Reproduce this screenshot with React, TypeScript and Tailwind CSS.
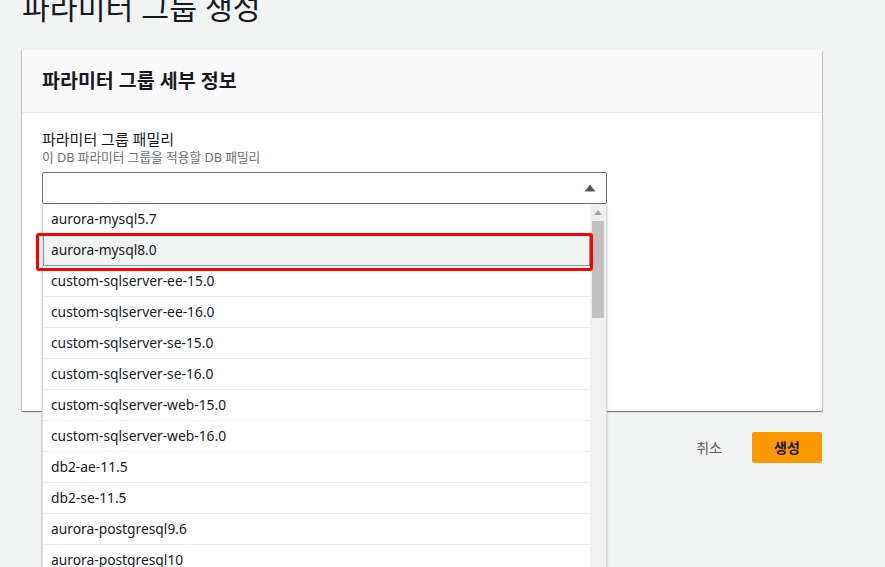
import React from "react";

const items = [
  "aurora-mysql5.7",
  "aurora-mysql8.0",
  "custom-sqlserver-ee-15.0",
  "custom-sqlserver-ee-16.0",
  "custom-sqlserver-se-15.0",
  "custom-sqlserver-se-16.0",
  "custom-sqlserver-web-15.0",
  "custom-sqlserver-web-16.0",
  "db2-ae-11.5",
  "db2-se-11.5",
  "aurora-postgresql9.6",
  "aurora-postgresql10",
];

export default function App() {
  return (
    <div
      className="relative w-[885px] h-[567px] overflow-hidden bg-[#f2f3f3] pl-[22px] text-[#16191f] flex flex-col"
      style={{ fontFamily: '"Noto Sans", "Noto Sans CJK KR", sans-serif' }}
    >
      <div className="h-[50px] flex flex-col shrink-0">
        <h1 className="text-[30.3px] leading-[30px] -mt-[7px] font-normal text-[#16191f] whitespace-nowrap">
          파라미터 그룹 생성
        </h1>
      </div>
      <div className="w-[800px] h-[361px] shrink-0 bg-white shadow-[0_1px_1px_0_rgba(0,28,36,0.3),1px_1px_1px_0_rgba(0,28,36,0.15),-1px_1px_1px_0_rgba(0,28,36,0.15)]">
        <div className="h-[63px] bg-[#fafafa] border-b border-[#eaeded] flex items-center px-[20px]">
          <h2 className="text-[19.5px] font-bold leading-none">파라미터 그룹 세부 정보</h2>
        </div>
        <div className="px-[20px] pt-[16px]">
          <div className="text-[15px] leading-[20px] text-[#16191f]">파라미터 그룹 패밀리</div>
          <div className="text-[12.7px] leading-[16px] text-[#687078]">이 DB 파라미터 그룹을 적용할 DB 패밀리</div>
          <div className="relative mt-[7px] w-[565px]">
            <div className="h-[32px] border border-[#687078] rounded-[2px] flex items-center justify-end pr-[10px] bg-white">
              <svg width="12" height="8" viewBox="0 0 12 8">
                <path d="M0.5 7.5 L6 0.5 L11.5 7.5 Z" fill="#545b64" />
              </svg>
            </div>
            <div className="absolute left-0 top-[32px] w-[565px] h-[400px] bg-white border border-t-0 border-[#d5dbdb] shadow-[0_1px_2px_rgba(0,28,36,0.3)] flex z-10">
              <div className="flex-1">
                {items.map((it, i) => (
                  <div
                    key={it}
                    className={
                      i === 1
                        ? "h-[31px] flex items-center pl-[7px] text-[13.8px] bg-[#f2f3f3] border border-[#879596]"
                        : "h-[31px] flex items-center pl-[8px] text-[13.8px] border-b border-[#eaeded]"
                    }
                  >
                    {it}
                  </div>
                ))}
              </div>
              <div className="w-[16px] bg-[#f1f1f1] flex flex-col items-center">
                <svg width="8" height="5" viewBox="0 0 8 5" className="mt-[6px]">
                  <path d="M0 5 L4 0 L8 5 Z" fill="#a3a3a3" />
                </svg>
                <div className="mt-[6px] w-[12px] h-[97px] bg-[#c1c1c1]" />
              </div>
            </div>
            <div className="absolute left-[-6px] top-[61px] w-[557px] h-[38px] border-[3px] border-[#ff0000] rounded-[3px] z-20 pointer-events-none" />
          </div>
        </div>
      </div>
      <div className="w-[800px] flex justify-end items-center mt-[21px] gap-[30px]">
        <span className="text-[14px] text-[#545b64]">취소</span>
        <button className="w-[70px] h-[31px] bg-[#ff9900] rounded-[2px] text-[14px] font-bold text-[#16191f]">
          생성
        </button>
      </div>
    </div>
  );
}
